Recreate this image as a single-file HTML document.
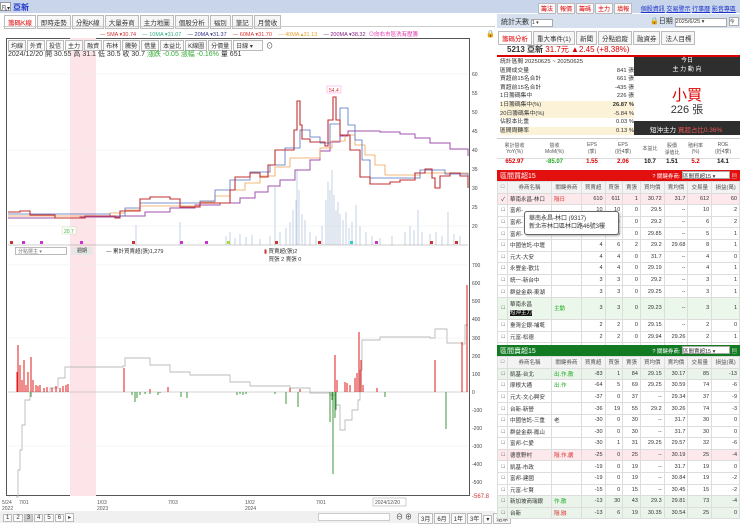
<!DOCTYPE html>
<html><head><meta charset="utf-8"><style>
*{margin:0;padding:0;box-sizing:border-box}
body{width:740px;height:523px;overflow:hidden;background:#fff;font-family:"Liberation Sans","Noto Sans CJK TC",sans-serif;font-size:7px;color:#333;position:relative}
.a{position:absolute}
.tab{display:inline-block;border:1px solid #bbb;padding:1px 3px;margin-right:1px;background:#f6f6f6;font-size:6.5px}
.btn{display:inline-block;border:1px solid #bbb;padding:0 2px;background:#fafafa;font-size:6px;margin-right:1px}
table{border-collapse:collapse;width:100%}
td{border:1px solid #ddd;height:11.6px;font-size:5.5px;text-align:right;padding:0 2px;white-space:nowrap}
td.l{text-align:left}
.hd td{background:#f3f3f3;text-align:center;color:#555}
.ck{width:10px}
</style></head><body>
<div class="a" style="left:0;top:0;width:740px;height:13px;background:#c9d5ea"></div>
<div class="a" style="left:0;top:2px;width:11px;height:9px;background:#fff;border:1px solid #999;font-size:6px">凡▾</div>
<div class="a" style="left:13px;top:2px;color:#1a33cc;font-weight:bold;font-size:8px">亞新</div>
<div class="a" style="left:538px;top:3px;font-size:6px">
<span class="btn" style="color:#d00">籌法</span><span class="btn" style="color:#d00">報價</span><span class="btn" style="color:#d00">籌碼</span><span class="btn" style="color:#d00">主力</span><span class="btn" style="color:#d00">填報</span>
<span style="color:#1a33cc;text-decoration:underline;margin-left:6px">個股資訊</span> <span style="color:#1a33cc;text-decoration:underline">交易警示</span> <span style="color:#1a33cc;text-decoration:underline">行事曆</span> <span style="color:#1a33cc;text-decoration:underline">影音專區</span></div>
<div class="a" style="left:4px;top:15px"><span class="tab" style="color:#d00;background:#fff">籌碼K線</span><span class="tab">即時走勢</span><span class="tab">分點K線</span><span class="tab">大量券商</span><span class="tab">主力地圖</span><span class="tab">個股分析</span><span class="tab">福別</span><span class="tab">筆記</span><span class="tab">月營收</span></div>
<div class="a" style="left:3px;top:26px;width:492px;height:1px;background:#ccc"></div>
<div class="a" style="left:100px;top:30px;font-size:5.5px;white-space:nowrap">
<span style="color:#c33">— 5MA ▾30.74</span>&nbsp;&nbsp;&nbsp;&nbsp;<span style="color:#3a8">— 10MA ▾31.07</span>&nbsp;&nbsp;&nbsp;&nbsp;<span style="color:#338">— 20MA ▾31.37</span>&nbsp;&nbsp;&nbsp;&nbsp;<span style="color:#d33">— 60MA ▾31.70</span>&nbsp;&nbsp;&nbsp;&nbsp;<span style="color:#e9a030">— 40MA ▴31.13</span>&nbsp;&nbsp;&nbsp;&nbsp;<span style="color:#828">— 200MA ▾38.32</span>&nbsp;&nbsp;<span style="color:#d3a">⊙向右市區洗有壓籌</span></div>
<div class="a" style="left:486px;top:30px;font-size:7px">🔒</div>
<div class="a" style="left:6px;top:38px;width:464px;height:458px;border:1px solid #555"></div>
<div class="a" style="left:70px;top:38px;width:26px;height:458px;background:#fde4e8"></div>
<div class="a" style="left:8px;top:40px"><span class="btn">均線</span><span class="btn">外資</span><span class="btn">投信</span><span class="btn">主力</span><span class="btn">融資</span><span class="btn">布林</span><span class="btn">騰勢</span><span class="btn">借量</span><span class="btn">本益比</span><span class="btn">K線圖</span><span class="btn">分價量</span><span class="btn" style="width:30px">日線 ▾</span> ⊙</div>
<div class="a" style="left:8px;top:49px;font-size:7px;white-space:nowrap">2024/12/20 開 30.55 高 31.1 低 30.5 收 30.7 <span style="color:#3a3">漲跌 -0.05 漲幅 -0.16%</span> 量 651</div>
<svg class="a" style="left:0;top:0" width="495" height="523">
<g stroke="#eee" stroke-width="0.6"><line x1="8" y1="74" x2="468" y2="74"/><line x1="8" y1="150" x2="468" y2="150"/><line x1="8" y1="226" x2="468" y2="226"/><line x1="8" y1="265" x2="468" y2="265"/><line x1="8" y1="338" x2="468" y2="338"/><line x1="8" y1="446" x2="468" y2="446"/></g>
<g stroke="#b7c8dc" stroke-width="0.8">
<path d="M136,245V225M180,245V222M226,245V236M230,245V232M235,245V238M240,245V234M246,245V237M252,245V235M260,245V239M270,245V236M275,245V187M280,245V232M286,245V228M290,245V222M293,245V210M296,245V200M297,245V170M299,245V190M302,245V214M305,245V220M310,245V232M316,245V236M322,245V226M326,245V200M328,245V182M330,245V190M332,245V170M334,245V195M336,245V210M338,245V202M340,245V214M343,245V220M346,245V212M349,245V228M352,245V222M356,245V205M360,245V226M366,245V232M372,245V236M380,245V238M392,245V236M405,245V232M410,245V226M414,245V230M418,245V210M422,245V232M430,245V234M436,245V232M442,245V236M448,245V212M454,245V234M460,245V236"/>
</g>
<path fill="none" stroke="#a050b0" stroke-width="1" d="M8,218 H80V217 H120V216 H145V212 H170V208 H195V205 H220V203 H240V198 H255V192 H268V186 H280V180 H295V170 H310V160 H320V151 H330V142 H340V136 H348V131 H380V132 H400V134 H415V138 H430V143 H450V149 H468V156"/>
<path fill="none" stroke="#f0a050" stroke-width="0.8" d="M8,216 H110V213 H125V210 H140V206 H200V202 H215V196 H230V190 H245V183 H260V176 H275V167 H290V158 H320V148 H332V141 H345V135 H355V145 H365V155 H375V165 H385V175 H420V173 H468V174"/>
<path fill="none" stroke="#5070c0" stroke-width="0.8" d="M8,214 H110V216 H125V208 H140V203 H200V201 H215V190 H230V180 H250V172 H270V165 H285V148 H300V130 H310V137 H320V143 H330V124 H340V108 H348V125 H355V140 H362V160 H370V178 H420V170 H445V174 H468V178"/>
<path fill="none" stroke="#c03030" stroke-width="1.1" d="M8,212 H20V211 H30V215 H40 H55V218 H70 H85V216 H100 H115V218 H120V211 H135 H140V199 H150V197 H170V199 H180V207 H200V203 H225 H230V190 H235V177 H250V173 H260V177 H268V165 H275V150 H290 H294V130 H297V101 H300V125 H302V139 H310V142 H325V146 H328V120 H333V97 H336V120 H340V135 H350V150 H360V177 H370V184 H390V182 H400V180 H415V173 H425V169 H432V178 H435V188 H440V176 H450V173 H460V176 H468V188"/>
<rect x="327" y="86" width="14" height="7" fill="#fff" stroke="#f4c"  stroke-width=".3"/><text x="329" y="92" font-size="5" fill="#d33">54.4</text>
<rect x="62" y="227" width="14" height="7" fill="#fff" stroke="#9c6" stroke-width=".3"/><text x="64" y="233" font-size="5" fill="#4a4">20.7</text>
<g font-size="5" fill="#444"><text x="472" y="76">60</text><text x="472" y="95">55</text><text x="472" y="114">50</text><text x="472" y="133">45</text><text x="472" y="152">40</text><text x="472" y="171">35</text><text x="472" y="190">30</text><text x="472" y="209">25</text><text x="472" y="228">20</text>
<text x="472" y="267">700</text><text x="472" y="285">600</text><text x="472" y="303">500</text><text x="472" y="321">400</text><text x="472" y="340">300</text><text x="472" y="358">200</text><text x="472" y="376">100</text><text x="472" y="394">0</text><text x="472" y="412">-100</text><text x="472" y="430">-200</text><text x="472" y="448">-300</text><text x="472" y="466">-400</text><text x="472" y="484">-500</text><text x="472" y="498" fill="#c33" font-size="6">-567.8</text></g>
<g><rect x="10" y="241" width="3" height="3" fill="#c33"/><rect x="22" y="241" width="3" height="3" fill="#c3c"/><rect x="40" y="241" width="3" height="3" fill="#c3c"/><rect x="80" y="241" width="3" height="3" fill="#c3c"/><rect x="132" y="241" width="3" height="3" fill="#c33"/><rect x="180" y="241" width="3" height="3" fill="#c3c"/><rect x="205" y="241" width="3" height="3" fill="#c3c"/><rect x="227" y="241" width="3" height="3" fill="#ad3"/><rect x="275" y="241" width="3" height="3" fill="#c33"/><rect x="318" y="241" width="3" height="3" fill="#c33"/><rect x="350" y="241" width="3" height="3" fill="#3cc"/><rect x="375" y="241" width="3" height="3" fill="#c3c"/><rect x="430" y="241" width="3" height="3" fill="#c33"/><rect x="455" y="241" width="3" height="3" fill="#c33"/></g>
<line x1="8" y1="245" x2="468" y2="245" stroke="#999" stroke-width=".5"/>
<line x1="8" y1="392" x2="468" y2="392" stroke="#aaa" stroke-width=".5"/>
<path fill="none" stroke="#bbb" stroke-width="0.9" d="M16,497 H18V470 H20V450 H22V425 H25V400 H30V392 H50V388 H58V378 H65V367 H123V366 H125V358 H150V365 H170V372 H190V375 H230V382 H250V386 H290V388 H310V393 H330V395 H335V405 H340V430 H345V420 H352V410 H358V400 H360V370 H362V340 H380V337 H430V338 H435V329 H445V329 H447V343 H462V344 H465V325 H468V325"/>
<g stroke="#d00" stroke-width="0.9" fill="none">
<path d="M17,392V372M18,392V345M20,392V365M22,392V380M24,392V360M26,392V385M28,392V372M31,392V357M33,392V380M36,392V385M38,392V386M40,392V385M44,392V388M47,392V387M52,392V388M56,392V386M60,392V388M63,392V386M66,392V385M68,392V384M124,392V368M150,392V389M168,392V387M290,392V388M300,392V389M335,392V355M337,392V380M345,392V382M347,392V383M350,392V385M355,392V378M357,392V373M359,392V332M361,392V360M363,392V385M377,392V388M435,392V360M462,392V342M467,392V285"/></g>
<g stroke="#2a8a2a" stroke-width="0.9" fill="none">
<path d="M31,392V397M132,392V395M135,392V402M137,392V398M140,392V395M145,392V394M150,392V394M158,392V395M160,392V393M181,392V397M187,392V398M237,392V395M240,392V394M243,392V395M246,392V394M275,392V394M286,392V404M298,392V407M330,392V422M332,392V400M333,392V474M335,392V418M336,392V410M385,392V397M446,392V429"/></g>
<g font-size="5" fill="#555"><text x="2" y="504">5/24</text><text x="2" y="510">2022</text><text x="19" y="504">7/01</text><text x="97" y="504">1/03</text><text x="97" y="510">2023</text><text x="168" y="504">7/03</text><text x="245" y="504">1/02</text><text x="245" y="510">2024</text><text x="316" y="504">7/01</text></g>
<rect x="373" y="498" width="33" height="8" fill="#fff" stroke="#888" stroke-width=".4"/><text x="375" y="504" font-size="5" fill="#555">2024/12/20</text>
</svg>
<div class="a" style="left:15px;top:247px;width:52px;height:8px;border:1px solid #bbb;font-size:5px;color:#777;padding-left:2px">分點選主 ▾</div>
<div class="a" style="left:71px;top:247px;width:22px;height:8px;background:#e6e6e6;font-size:5px;text-align:center">週期</div>
<div class="a" style="left:106px;top:247px;font-size:5.5px">— 累計買賣超(張)1,279</div>
<div class="a" style="left:264px;top:247px;font-size:5.5px"><span style="color:#c33">▮</span> 買賣超(張)2<br>&nbsp;&nbsp;&nbsp;買張 2 賣張 0</div>
<div class="a" style="left:0;top:511px;width:495px;height:12px;background:#f0f0f0"></div>
<div class="a" style="left:3px;top:513px"><span class="btn">1</span><span class="btn">2</span><span class="btn" style="background:#ccc">3</span><span class="btn">4</span><span class="btn">5</span><span class="btn">6</span><span class="btn">▸</span></div>
<div class="a" style="left:318px;top:513px;width:72px;height:8px;background:#fff;border:1px solid #ccc"></div>
<div class="a" style="left:396px;top:512px;font-size:7px">⊖ ⊕</div>
<div class="a" style="left:418px;top:513px"><span class="btn">3月</span><span class="btn">6月</span><span class="btn">1年</span><span class="btn">3年</span><span class="btn">▾</span><span class="btn">還原</span></div>
<div class="a" style="left:497px;top:14px;width:243px;height:14px;background:#d6e0ee"></div>
<div class="a" style="left:501px;top:17px;font-size:7px">統計天數 <span style="display:inline-block;width:22px;height:8px;background:#fff;border:1px solid #aaa;font-size:5px">1 ▾</span></div>
<div class="a" style="left:650px;top:16px;font-size:7px">🔒日期 <span style="display:inline-block;width:52px;height:9px;background:#fff;border:1px solid #aaa;font-size:5.5px">2025/6/25 ▾</span> <span style="display:inline-block;width:10px;height:9px;background:#fff;border:1px solid #aaa;font-size:5px">今</span></div>
<div class="a" style="left:498px;top:31px"><span class="tab" style="color:#d00;background:#fff">籌碼分析</span><span class="tab">重大事件(1)</span><span class="tab">新聞</span><span class="tab">分點追蹤</span><span class="tab">融資券</span><span class="tab">法人目標</span></div>
<div class="a" style="left:507px;top:44px;font-size:8px;font-weight:bold">5213 亞新 <span style="color:#d00;font-weight:normal">31.7元 ▲2.45 (+8.38%)</span></div>
<div class="a" style="left:497px;top:55px;width:243px;height:1.5px;background:#d00"></div>
<div class="a" style="left:500px;top:58px;width:134px;font-size:5.8px;line-height:8.6px">
<div>統計區間 20250625 ~ 20250625</div>
<div>區間成交量<span style="float:right">841 張</span></div>
<div>買超前15名合計<span style="float:right">661 張</span></div>
<div>賣超前15名合計<span style="float:right">-435 張</span></div>
<div>1日籌碼集中<span style="float:right">226 張</span></div>
<div style="background:#fbf2d8">1日籌碼集中(%)<span style="float:right;font-weight:bold">26.87 %</span></div>
<div style="background:#fbf2d8">20日籌碼集中(%)<span style="float:right">-5.84 %</span></div>
<div>佔股本比重<span style="float:right">0.03 %</span></div>
<div style="background:#fbf2d8">區間周轉率<span style="float:right">0.13 %</span></div>
</div>
<div class="a" style="left:634px;top:57px;width:106px;height:19px;background:#2e2e2e;color:#fff;text-align:center;font-size:6px;line-height:9px">今日<br>主 力 動 向</div>
<div class="a" style="left:634px;top:84px;width:106px;text-align:center;color:#d00;font-size:15px">小買</div>
<div class="a" style="left:634px;top:101px;width:106px;text-align:center;font-size:11px">226 張</div>
<div class="a" style="left:634px;top:121px;width:106px;height:14px;background:#2e2e2e;color:#fff;font-size:6.5px;padding:3px 0 0 16px">短沖主力 <span style="color:#e55">買超占比0.36%</span></div>
<div class="a" style="left:497px;top:138px;width:243px;height:32px;border-top:1px solid #ccc;font-size:5px;color:#555">
<div style="display:flex;text-align:center;height:19px;align-items:center"><div style="width:35px">累計營收<br>YoY(%)</div><div style="width:45px">營收<br>MoM(%)</div><div style="width:30px">EPS<br>(季)</div><div style="width:32px">EPS<br>(近4季)</div><div style="width:22px">本益比</div><div style="width:22px">股價<br>淨值比</div><div style="width:25px">殖利率<br>(%)</div><div style="width:30px">ROE<br>(近4季)</div></div>
<div style="display:flex;text-align:center;font-size:6px;font-weight:bold;border-top:1px solid #ddd"><div style="width:35px;color:#d00">652.97</div><div style="width:45px;color:#2a2">-85.07</div><div style="width:30px;color:#d00">1.55</div><div style="width:32px;color:#d00">2.06</div><div style="width:22px;color:#111">10.7</div><div style="width:22px;color:#111">1.51</div><div style="width:25px;color:#d00">5.2</div><div style="width:30px;color:#111">14.1</div></div></div>
<div class="a" style="left:497px;top:170px;width:243px;height:11px;background:#e31010;color:#fff;font-size:7px;padding:1px 3px">區間買超15<span style="float:right;font-size:5.5px">? 關鍵券商: <span style="display:inline-block;width:48px;height:8px;background:#fff;color:#333;border:1px solid #aaa">區間買超15 ▾</span> ▤</span></div>
<div class="a" style="left:497px;top:181px;width:243px">
<table>
<tr class="hd"><td class="ck">□</td><td>券商名稱</td><td>關鍵券商</td><td>買賣超</td><td>買張</td><td>賣張</td><td>買均價</td><td>賣均價</td><td>交易量</td><td>損益(萬)</td></tr>
<tr style="background:#fde8ec"><td>✓</td><td class="l">華南永昌-林口</td><td class="l" style="color:#d33">隔日</td><td>610</td><td>611</td><td>1</td><td>30.72</td><td>31.7</td><td>612</td><td>60</td></tr>
<tr><td>□</td><td class="l">富邦-</td><td></td><td>10</td><td>10</td><td>0</td><td>29.5</td><td>--</td><td>10</td><td>2</td></tr>
<tr><td>□</td><td class="l">富邦-</td><td></td><td>6</td><td>6</td><td>0</td><td>29.2</td><td>--</td><td>6</td><td>2</td></tr>
<tr><td>□</td><td class="l">富邦-</td><td></td><td>5</td><td>5</td><td>0</td><td>29.85</td><td>--</td><td>5</td><td>1</td></tr>
<tr><td>□</td><td class="l">中國信託-中壢</td><td></td><td>4</td><td>6</td><td>2</td><td>29.2</td><td>29.68</td><td>8</td><td>1</td></tr>
<tr><td>□</td><td class="l">元大-大安</td><td></td><td>4</td><td>4</td><td>0</td><td>31.7</td><td>--</td><td>4</td><td>0</td></tr>
<tr><td>□</td><td class="l">永豐金-歡北</td><td></td><td>4</td><td>4</td><td>0</td><td>29.19</td><td>--</td><td>4</td><td>1</td></tr>
<tr><td>□</td><td class="l">統一-新台中</td><td></td><td>3</td><td>3</td><td>0</td><td>29.2</td><td>--</td><td>3</td><td>1</td></tr>
<tr><td>□</td><td class="l">群益金鼎-東湖</td><td></td><td>3</td><td>3</td><td>0</td><td>29.25</td><td>--</td><td>3</td><td>1</td></tr>
<tr style="background:#eaf7ea"><td style="height:22px">□</td><td class="l">華南永昌<br><span style="background:#111;color:#fff">短沖主力</span></td><td class="l" style="color:#2a2">主動</td><td>3</td><td>3</td><td>0</td><td>29.23</td><td>--</td><td>3</td><td>1</td></tr>
<tr><td>□</td><td class="l">臺灣企銀-埔墘</td><td></td><td>2</td><td>2</td><td>0</td><td>29.15</td><td>--</td><td>2</td><td>0</td></tr>
<tr><td>□</td><td class="l">元富-松德</td><td></td><td>2</td><td>2</td><td>0</td><td>29.94</td><td>29.26</td><td>2</td><td>1</td></tr>
<tr><td>□</td><td class="l">台新-北橋</td><td></td><td>2</td><td>2</td><td>0</td><td>29.2</td><td>--</td><td>2</td><td>0</td></tr>
</table></div>
<div class="a" style="left:524px;top:211px;width:95px;height:24px;background:#fff;border:1px solid #666;border-radius:3px;font-size:6px;padding:3px 4px;line-height:8px;box-shadow:1px 1px 2px #aaa">華南永昌-林口 (9317)<br>新北市林口區林口路46號3樓</div>
<div class="a" style="left:497px;top:345px;width:243px;height:11px;background:#127a23;color:#fff;font-size:7px;padding:1px 3px">區間賣超15<span style="float:right;font-size:5.5px">? 關鍵券商: <span style="display:inline-block;width:48px;height:8px;background:#fff;color:#333;border:1px solid #aaa">區間賣超15 ▾</span> ▤</span></div>
<div class="a" style="left:497px;top:356px;width:243px">
<table>
<tr class="hd"><td class="ck">□</td><td>券商名稱</td><td>關鍵券商</td><td>買賣超</td><td>買張</td><td>賣張</td><td>買均價</td><td>賣均價</td><td>交易量</td><td>損益(萬)</td></tr>
<tr style="background:#eaf4ea"><td>□</td><td class="l">凱基-台北</td><td class="l" style="color:#2a2">出.作.散</td><td>-83</td><td>1</td><td>84</td><td>29.15</td><td>30.17</td><td>85</td><td>-13</td></tr>
<tr><td>□</td><td class="l">摩根大通</td><td class="l" style="color:#2a2">出.作</td><td>-64</td><td>5</td><td>69</td><td>29.25</td><td>30.59</td><td>74</td><td>-6</td></tr>
<tr><td>□</td><td class="l">元大-文心興安</td><td></td><td>-37</td><td>0</td><td>37</td><td>--</td><td>29.34</td><td>37</td><td>-9</td></tr>
<tr><td>□</td><td class="l">台新-新營</td><td></td><td>-36</td><td>19</td><td>55</td><td>29.2</td><td>30.26</td><td>74</td><td>-3</td></tr>
<tr><td>□</td><td class="l">中國信託-三重</td><td class="l">老</td><td>-30</td><td>0</td><td>30</td><td>--</td><td>31.7</td><td>30</td><td>0</td></tr>
<tr><td>□</td><td class="l">群益金鼎-鳳山</td><td></td><td>-30</td><td>0</td><td>30</td><td>--</td><td>31.7</td><td>30</td><td>0</td></tr>
<tr><td>□</td><td class="l">富邦-仁愛</td><td></td><td>-30</td><td>1</td><td>31</td><td>29.25</td><td>29.57</td><td>32</td><td>-6</td></tr>
<tr style="background:#fde8ec"><td>□</td><td class="l">德意野村</td><td class="l" style="color:#d33">隔.作.嚴</td><td>-25</td><td>0</td><td>25</td><td>--</td><td>30.19</td><td>25</td><td>-4</td></tr>
<tr><td>□</td><td class="l">凱基-市政</td><td></td><td>-19</td><td>0</td><td>19</td><td>--</td><td>31.7</td><td>19</td><td>0</td></tr>
<tr><td>□</td><td class="l">富邦-建國</td><td></td><td>-19</td><td>0</td><td>19</td><td>--</td><td>30.84</td><td>19</td><td>-2</td></tr>
<tr><td>□</td><td class="l">元富-七賢</td><td></td><td>-15</td><td>0</td><td>15</td><td>--</td><td>30.45</td><td>15</td><td>-2</td></tr>
<tr style="background:#eaf4ea"><td>□</td><td class="l">新加坡商瑞銀</td><td class="l" style="color:#2a2">作.散</td><td>-13</td><td>30</td><td>43</td><td>29.3</td><td>29.81</td><td>73</td><td>-4</td></tr>
<tr style="background:#eaf4ea"><td>□</td><td class="l">台新</td><td class="l" style="color:#d33">隔.融</td><td>-13</td><td>6</td><td>19</td><td>30.35</td><td>30.54</td><td>25</td><td>0</td></tr>
</table></div>
</body></html>
